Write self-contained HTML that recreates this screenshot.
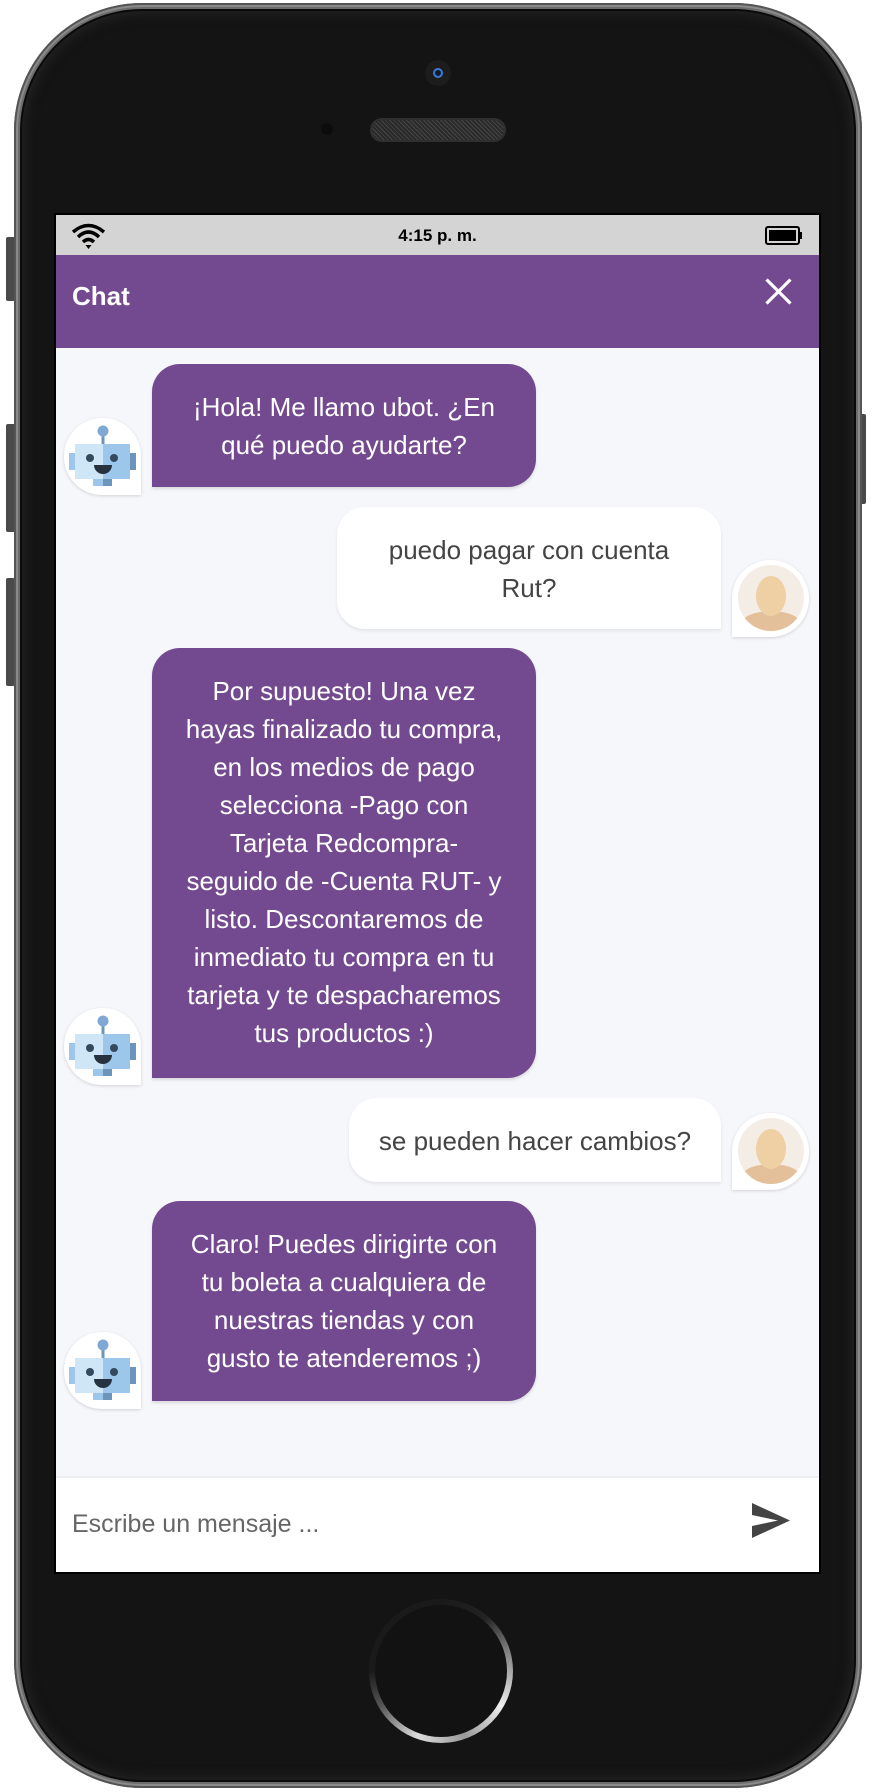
<!DOCTYPE html>
<html><head><meta charset="utf-8">
<style>
*{margin:0;padding:0;box-sizing:border-box}
html,body{width:876px;height:1792px;background:#fff;overflow:hidden;font-family:"Liberation Sans",Arial,sans-serif}
.abs{position:absolute}
.phone{left:14px;top:3px;width:848px;height:1785px;border-radius:128px;background:#6c6c6c;box-shadow:inset 0 0 0 2px #555, inset 0 0 0 4px #8a8a8a}
.inner{left:22px;top:11px;width:832px;height:1769px;border-radius:120px;background:#141414;box-shadow:0 0 0 2px #0a0a0a, inset 0 0 14px #2a2a2a}
.btn{background:#4a4a4a;border-radius:2px}
.screen{left:56px;top:215px;width:763px;height:1357px;background:#f6f7fb;overflow:hidden;box-shadow:0 0 0 2px #000}
.status{left:0;top:0;width:763px;height:40px;background:#d4d4d4}
.time{left:0;width:763px;top:11px;text-align:center;font-weight:bold;font-size:17px;color:#000}
.header{left:0;top:40px;width:763px;height:93px;background:#73498f}
.title{left:16px;top:26px;color:#fff;font-weight:bold;font-size:26px}
.bubble{position:absolute;border-radius:28px;font-size:26px;line-height:38px;text-align:center;white-space:nowrap;padding-top:24px}
.bot{background:#73498f;color:#fff;left:96px;width:384px;border-bottom-left-radius:0;box-shadow:0 2px 3px rgba(0,0,0,.12)}
.user{background:#fff;color:#444;right:98px;border-bottom-right-radius:0;box-shadow:0 2px 3px rgba(0,0,0,.08)}
.av{position:absolute;width:77px;height:77px;background:#fff;box-shadow:0 1px 3px rgba(0,0,0,.15)}
.avb{left:8px;border-radius:38px 38px 0 38px}
.avu{left:676px;border-radius:38px 38px 38px 0}
.input{left:0;top:1261px;width:763px;height:96px;background:#fff;border-top:2px solid #eceef2}
.ph{left:16px;top:32px;font-size:25px;color:#666}
</style></head><body>
<div class="abs btn" style="left:6px;top:237px;width:9px;height:64px"></div>
<div class="abs btn" style="left:6px;top:424px;width:9px;height:108px"></div>
<div class="abs btn" style="left:6px;top:578px;width:9px;height:108px"></div>
<div class="abs btn" style="left:859px;top:414px;width:7px;height:90px"></div>
<div class="abs phone"></div>
<div class="abs inner"></div>
<div class="abs" style="left:425px;top:60px;width:26px;height:26px;border-radius:50%;background:#1d1d1d"></div>
<div class="abs" style="left:433px;top:68px;width:10px;height:10px;border-radius:50%;border:2px solid #3a7bd5;background:#0c1a30"></div>
<div class="abs" style="left:321px;top:123px;width:12px;height:12px;border-radius:50%;background:#0c0c0c"></div>
<div class="abs" style="left:372px;top:120px;width:132px;height:20px;border-radius:10px;background:repeating-linear-gradient(45deg,#2a2a2a 0 2px,#444 2px 3px);box-shadow:0 0 0 2px #303030"></div>
<div class="abs" style="left:369px;top:1599px;width:144px;height:144px;border-radius:50%;background:conic-gradient(from 0deg,#1a1a1a 0deg,#222 40deg,#777 70deg,#eee 120deg,#999 160deg,#ddd 200deg,#555 240deg,#1a1a1a 270deg,#1a1a1a 360deg)"></div>
<div class="abs" style="left:375px;top:1605px;width:132px;height:132px;border-radius:50%;background:#121212"></div>

<div class="abs screen">
  <div class="abs status">
    <svg class="abs" style="left:14px;top:7px" width="37" height="27" viewBox="0 0 37 27">
      <path d="M3 10 Q18.5 -3 34 10" fill="none" stroke="#000" stroke-width="3.5"/>
      <path d="M8 15 Q18.5 5 29 15" fill="none" stroke="#000" stroke-width="3.5"/>
      <path d="M13 20 Q18.5 15 24 20" fill="none" stroke="#000" stroke-width="3.5"/>
      <path d="M15.5 23 L21.5 23 L18.5 27 Z" fill="#000"/>
    </svg>
    <div class="abs time">4:15 p. m.</div>
    <svg class="abs" style="left:709px;top:11px" width="38" height="19" viewBox="0 0 38 19">
      <rect x="1" y="1" width="33" height="17" rx="2" fill="none" stroke="#000" stroke-width="2"/>
      <rect x="4" y="4" width="27" height="11" fill="#000"/>
      <rect x="34" y="6" width="3" height="7" fill="#000"/>
    </svg>
  </div>
  <div class="abs header">
    <div class="abs title">Chat</div>
    <svg class="abs" style="left:709px;top:23px" width="27" height="27" viewBox="0 0 27 27">
      <path d="M1.5 1.5 L25.5 25.5 M25.5 1.5 L1.5 25.5" stroke="#fff" stroke-width="3.2"/>
    </svg>
  </div>

  <div class="bubble bot" style="top:149px;height:123px">¡Hola! Me llamo ubot. ¿En<br>qué puedo ayudarte?</div>
  <div class="av avb" style="top:203px"><svg width="77" height="77" viewBox="0 0 77 77"><use href="#robot"/></svg></div>

  <div class="bubble user" style="top:292px;height:122px;width:384px">puedo pagar con cuenta<br>Rut?</div>
  <div class="av avu" style="top:345px"><svg width="77" height="77" viewBox="0 0 77 77"><use href="#person"/></svg></div>

  <div class="bubble bot" style="top:433px;height:430px">Por supuesto! Una vez<br>hayas finalizado tu compra,<br>en los medios de pago<br>selecciona -Pago con<br>Tarjeta Redcompra-<br>seguido de -Cuenta RUT- y<br>listo. Descontaremos de<br>inmediato tu compra en tu<br>tarjeta y te despacharemos<br>tus productos :)</div>
  <div class="av avb" style="top:793px"><svg width="77" height="77" viewBox="0 0 77 77"><use href="#robot"/></svg></div>

  <div class="bubble user" style="top:883px;height:84px;width:372px">se pueden hacer cambios?</div>
  <div class="av avu" style="top:898px"><svg width="77" height="77" viewBox="0 0 77 77"><use href="#person"/></svg></div>

  <div class="bubble bot" style="top:986px;height:200px">Claro! Puedes dirigirte con<br>tu boleta a cualquiera de<br>nuestras tiendas y con<br>gusto te atenderemos ;)</div>
  <div class="av avb" style="top:1117px"><svg width="77" height="77" viewBox="0 0 77 77"><use href="#robot"/></svg></div>

  <div class="abs input">
    <div class="abs ph">Escribe un mensaje ...</div>
    <svg class="abs" style="left:696px;top:25px" width="40" height="37" viewBox="0 0 40 37">
      <path d="M0 0 L38 17.5 L0 35 L0 23 L26 17.5 L0 12 Z" fill="#444"/>
    </svg>
  </div>
</div>

<svg width="0" height="0" style="position:absolute">
  <defs>
    <g id="robot">
      <rect x="37.5" y="13" width="3" height="14" fill="#6d94bb"/>
      <circle cx="39" cy="13" r="5.5" fill="#7fa9d4"/>
      <rect x="5" y="35" width="7" height="17" fill="#9cc6ea"/>
      <rect x="65" y="35" width="7" height="17" fill="#6d94bb"/>
      <rect x="11" y="26" width="28" height="35" fill="#cfe6f7"/>
      <rect x="39" y="26" width="27" height="35" fill="#9cc6ea"/>
      <circle cx="26" cy="40" r="4" fill="#34495e"/>
      <circle cx="50" cy="40" r="4" fill="#34495e"/>
      <path d="M30 47 L48 47 A9 9 0 0 1 30 47 Z" fill="#26323f"/>
      <rect x="29" y="61" width="10" height="7" fill="#9cc6ea"/>
      <rect x="39" y="61" width="9" height="7" fill="#6d94bb"/>
    </g>
    <g id="person">
      <clipPath id="pc"><circle cx="39" cy="38" r="33"/></clipPath>
      <circle cx="39" cy="38" r="33" fill="#f4ede6"/>
      <g clip-path="url(#pc)">
        <path d="M8 66 Q10 55 28 52 L50 52 Q68 55 70 66 L70 75 L8 75 Z" fill="#e4c09a"/>
        <ellipse cx="39" cy="36" rx="15" ry="20" fill="#efcfa4"/>
      </g>
    </g>
  </defs>
</svg>
</body></html>
